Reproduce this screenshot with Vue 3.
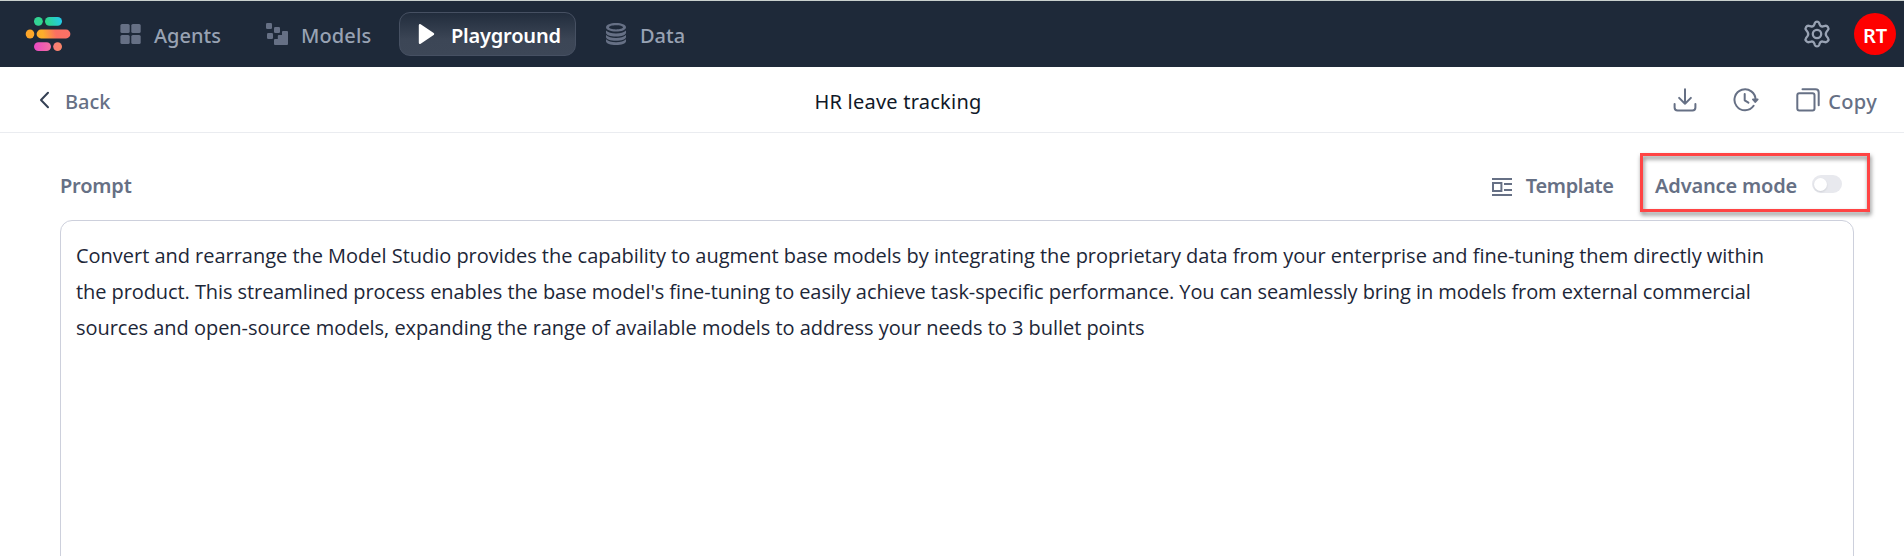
<script setup>
const promptLines = [
  { id: 'first', text: 'Convert and rearrange the Model Studio provides the capability to augment base models by integrating the proprietary data from your enterprise and fine-tuning them directly within' },
  { id: 'second', text: "the product. This streamlined process enables the base model's fine-tuning to easily achieve task-specific performance. You can seamlessly bring in models from external commercial" },
  { id: 'third', text: 'sources and open-source models, expanding the range of available models to address your needs to 3 bullet points' },
]
</script>

<template>
  <div class="page">
    <header class="topbar">
      <svg class="logo" width="46" height="36" viewBox="0 0 46 36">
        <defs>
          <linearGradient id="lg-green" gradientUnits="userSpaceOnUse" x1="9" y1="10" x2="37" y2="0">
            <stop offset="0" stop-color="#34d399" /><stop offset="0.45" stop-color="#2fd58b" /><stop offset="1" stop-color="#22c8f5" />
          </linearGradient>
          <linearGradient id="lg-orange" gradientUnits="userSpaceOnUse" x1="0" y1="22" x2="45" y2="13">
            <stop offset="0" stop-color="#fda329" /><stop offset="0.4" stop-color="#feae2b" /><stop offset="0.68" stop-color="#fb7062" /><stop offset="1" stop-color="#fb7167" />
          </linearGradient>
          <linearGradient id="lg-pink" gradientUnits="userSpaceOnUse" x1="9" y1="30" x2="37" y2="30">
            <stop offset="0" stop-color="#ea48c4" /><stop offset="0.6" stop-color="#f26fa0" /><stop offset="0.75" stop-color="#f97f74" /><stop offset="1" stop-color="#fa8468" />
          </linearGradient>
        </defs>
        <g fill="url(#lg-green)"><rect x="9" y="0.9" width="8.8" height="8.8" rx="4.4" /><rect x="20" y="0.9" width="17" height="8.8" rx="4.4" /></g>
        <g fill="url(#lg-orange)"><rect x="0.7" y="13.6" width="8.6" height="8.8" rx="4.3" /><rect x="11.6" y="13.6" width="33.8" height="8.8" rx="4.4" /></g>
        <g fill="url(#lg-pink)"><rect x="9" y="26.2" width="17" height="8.8" rx="4.4" /><rect x="28.2" y="26.2" width="8.8" height="8.8" rx="4.4" /></g>
      </svg>

      <nav class="nav">
        <a class="item agents">
          <svg width="22" height="22" viewBox="0 0 22 22" fill="#667085">
            <rect x="0.4" y="1" width="9.3" height="9" rx="1.6" /><rect x="11.3" y="1" width="9.4" height="9" rx="1.6" />
            <rect x="0.4" y="12" width="9.3" height="9" rx="1.6" /><rect x="11.3" y="12" width="9.4" height="9" rx="1.6" />
          </svg>
          <span>Agents</span>
        </a>
        <a class="item models">
          <svg width="22" height="22" viewBox="0 0 22 22" fill="#667085">
            <rect x="0" y="0" width="6" height="6" rx="1.2" /><rect x="8" y="4" width="6" height="6" rx="1.2" /><rect x="1" y="10" width="6" height="6" rx="1.2" />
            <path d="M17 8h4q1 0 1 1v12q0 1-1 1H9q-1 0-1-1v-4q0-1 1-1h2.800v-3q0-1 1-1H16V9q0-1 1-1Z" />
          </svg>
          <span>Models</span>
        </a>
        <a class="item active">
          <svg width="17" height="22" viewBox="0 0 17 22">
            <path d="M2 2.200 15 11 2 19.800Z" fill="#fff" stroke="#fff" stroke-width="2.400" stroke-linejoin="round" />
          </svg>
          <span>Playground</span>
        </a>
        <a class="item data">
          <svg width="20" height="22" viewBox="0 0 20 22" fill="#667085">
            <path fill-rule="evenodd" d="M10 0c5.600 0 10 1.700 10 4.200S15.600 8.600 10 8.600 0 6.800 0 4.300 4.400 0 10 0Zm0 2.200c-3.900 0-7 .9-7 2.100s3.100 2.100 7 2.100 7-.9 7-2.100S13.900 2.200 10 2.200Z" />
            <path d="M0 7.500c2 2 5.600 2.900 10 2.900s8-.9 10-2.900v2.200c0 2.300-4.400 3.700-10 3.700S0 12 0 9.700Z" />
            <path d="M0 12c2 2 5.600 2.900 10 2.900s8-.9 10-2.900v2c0 2.300-4.400 3.700-10 3.700S0 16.300 0 14Z" />
            <path d="M0 16.300c2 2 5.600 2.900 10 2.900s8-.9 10-2.900v2c0 2.300-4.400 3.700-10 3.700S0 20.600 0 18.300Z" />
          </svg>
          <span>Data</span>
        </a>
      </nav>

      <svg class="gear" width="28" height="30" viewBox="0 0 28 30" fill="none" stroke="#98a2b3" stroke-width="2.300" stroke-linejoin="round">
        <circle cx="14" cy="15" r="4.200" />
        <path d="M11.900 3.900C12.600 2.200 15.400 2.200 16.100 3.900L16.700 5.600C17.200 7 18.600 7.700 20 7.300L22.200 6.800C24.500 6.400 26.300 9.200 25 10.900L23.500 12.900C22.600 14.200 22.600 15.800 23.500 17.100L25 19.100C26.300 20.800 24.500 23.600 22.200 23.200L20 22.700C18.600 22.300 17.200 23 16.700 24.400L16.100 26.100C15.400 27.800 12.600 27.800 11.900 26.100L11.300 24.400C10.800 23 9.400 22.300 8 22.700L5.800 23.200C3.500 23.600 1.700 20.800 3 19.100L4.500 17.100C5.400 15.800 5.400 14.200 4.500 12.900L3 10.900C1.700 9.200 3.500 6.400 5.800 6.800L8 7.300C9.400 7.700 10.800 7 11.300 5.600Z" />
      </svg>
      <div class="avatar"><span>RT</span></div>
    </header>

    <div class="subbar">
      <a class="back">
        <svg width="11" height="18" viewBox="0 0 11 18" fill="none" stroke="#344054" stroke-width="2"><path d="M9 1.800 2 9l7 7.200" stroke-linecap="round" stroke-linejoin="round" /></svg>
        <span>Back</span>
      </a>
      <h1 class="title">HR leave tracking</h1>
      <div class="actions">
        <svg class="download" width="24" height="24" viewBox="0 0 24 24" fill="none" stroke="#667085" stroke-width="2" stroke-linecap="round" stroke-linejoin="round">
          <path d="M12 1.200v14.600M6.100 9.900l5.900 5.900 5.900-5.900M1.600 16v3.500q0 3 3 3h14.800q3 0 3-3V16" />
        </svg>
        <svg class="history" width="26" height="24" viewBox="0 0 26 24" fill="none" stroke="#667085" stroke-width="2" stroke-linecap="round" stroke-linejoin="round">
          <path d="M20.600 17.800A10.500 10.500 0 1 1 22.500 12" /><path d="M11.700 5.900v6.400l3.700 2.300" /><path d="M20 11.400h4.600l-2.300 2.500Z" fill="#667085" />
        </svg>
        <a class="copy">
          <svg width="24" height="24" viewBox="0 0 24 24" fill="none" stroke="#667085" stroke-width="2" stroke-linecap="round">
            <rect x="1.300" y="5.300" width="17.200" height="17.200" rx="2" /><path d="M6.500 1.300H19.500q3.200 0 3.200 3.200V17.300" />
          </svg>
          <span>Copy</span>
        </a>
      </div>
    </div>

    <main class="content">
      <div class="toolbar">
        <span class="label">Prompt</span>
        <a class="template">
          <svg width="20" height="18" viewBox="0 0 20 18" fill="#667085">
            <rect width="20" height="2" /><rect y="16" width="20" height="2" /><rect x="12" y="5" width="8" height="2" /><rect x="12" y="11" width="8" height="2" />
            <rect x="1" y="5" width="8.400" height="8" fill="none" stroke="#667085" stroke-width="2" />
          </svg>
          <span>Template</span>
        </a>
        <div class="mode">
          <span>Advance mode</span>
          <i class="toggle"><i class="knob"></i></i>
          <div class="highlight"></div>
        </div>
      </div>
      <div class="editor">
        <p v-for="line in promptLines" :key="line.id" :class="line.id">{{ line.text }}</p>
      </div>
    </main>
  </div>
</template>

<style scoped>
.page { height: 556px; overflow: hidden; display: flex; flex-direction: column; background: #fff; font: 500 20px/28px "Noto Sans", "Open Sans", sans-serif; color: #667085; }
svg { display: block; flex: none; }
span { white-space: nowrap; }

.topbar { box-sizing: border-box; height: 67px; flex: none; display: flex; align-items: center; padding: 0 8px 0 25px; background: #1e2939; border-top: 1px solid #c9d0cd; }
.nav { display: flex; align-items: center; margin-left: 49px; }
.item { display: flex; align-items: center; color: #98a2b3; }
.item span { padding-top: 3px; }
.agents span { margin-left: 12px; }
.models { margin-left: 45px; }
.models span { margin-left: 13px; letter-spacing: 0.15px; }
.active { box-sizing: border-box; width: 177px; height: 44px; margin-left: 27.600px; padding-left: 18px; border: 1px solid #465062; border-radius: 11px; background: linear-gradient(#222d3d, #3c4656 65%, #3d4757); color: #fff; font-weight: 600; }
.active span { margin-left: 16px; letter-spacing: -0.2px; }
.data { margin-left: 30px; }
.data span { margin-left: 14px; }
.gear { margin-left: auto; }
.avatar { width: 42px; height: 42px; margin-left: 23px; border-radius: 50%; background: #fe0000; color: #fff; display: flex; align-items: center; justify-content: center; font-weight: 600; }
.avatar span { padding-top: 3px; }

.subbar { box-sizing: border-box; height: 66px; flex: none; display: grid; grid-template-columns: 1fr auto 1fr; align-items: center; padding: 0 27px 0 39px; border-bottom: 1px solid #eaecf0; }
.back { display: flex; align-items: center; }
.back span { margin-left: 15px; padding-top: 5px; }
.title { margin: 0 120px 0 0; padding-top: 5px; font-size: 20px; font-weight: 400; letter-spacing: 0.23px; color: #101828; }
.actions { display: flex; align-items: center; justify-content: flex-end; }
.history { margin-left: 36px; }
.copy { display: flex; align-items: center; margin-left: 37px; }
.copy span { margin-left: 8px; padding-top: 5px; letter-spacing: 0.3px; }

.content { flex: 1; min-height: 0; display: flex; flex-direction: column; padding: 0 50px 0 60px; }
.toolbar { height: 87px; flex: none; display: flex; align-items: center; font-weight: 600; }
.label { padding-top: 19px; letter-spacing: -0.2px; }
.template { display: flex; align-items: center; margin-left: auto; padding-top: 18px; }
.template svg { margin-top: 2px; }
.template span { margin-left: 14px; letter-spacing: -0.33px; }
.mode { position: relative; display: flex; align-items: center; margin-left: 41.400px; padding: 19px 12px 0 0; letter-spacing: -0.18px; }
.toggle { display: flex; align-items: center; box-sizing: border-box; width: 30px; height: 18px; margin: -4px 0 0 15px; padding-left: 2px; border-radius: 9px; background: #e8e9ee; }
.knob { width: 13px; height: 13px; border-radius: 50%; background: #fff; box-shadow: 0 1px 2px rgba(16, 24, 40, 0.12); }
.highlight { position: absolute; box-sizing: border-box; left: -15px; top: 0; width: 230px; height: 59px; border: 3px solid #ff4444; filter: drop-shadow(1px 3px 2px rgba(0, 0, 0, 0.5)); }

.editor { box-sizing: border-box; height: 480px; flex: none; padding: 17px 15px; border: 1px solid #cdd0dc; border-radius: 12px; font: 400 20px/36px "Open Sans", "Noto Sans", sans-serif; color: #1d2738; }
.editor p { margin: 0; white-space: nowrap; }
.first { letter-spacing: -0.025px; }
.second { letter-spacing: -0.08px; }
.third { letter-spacing: -0.035px; }
</style>

<style>
body { margin: 0; background: #fff; }
</style>
